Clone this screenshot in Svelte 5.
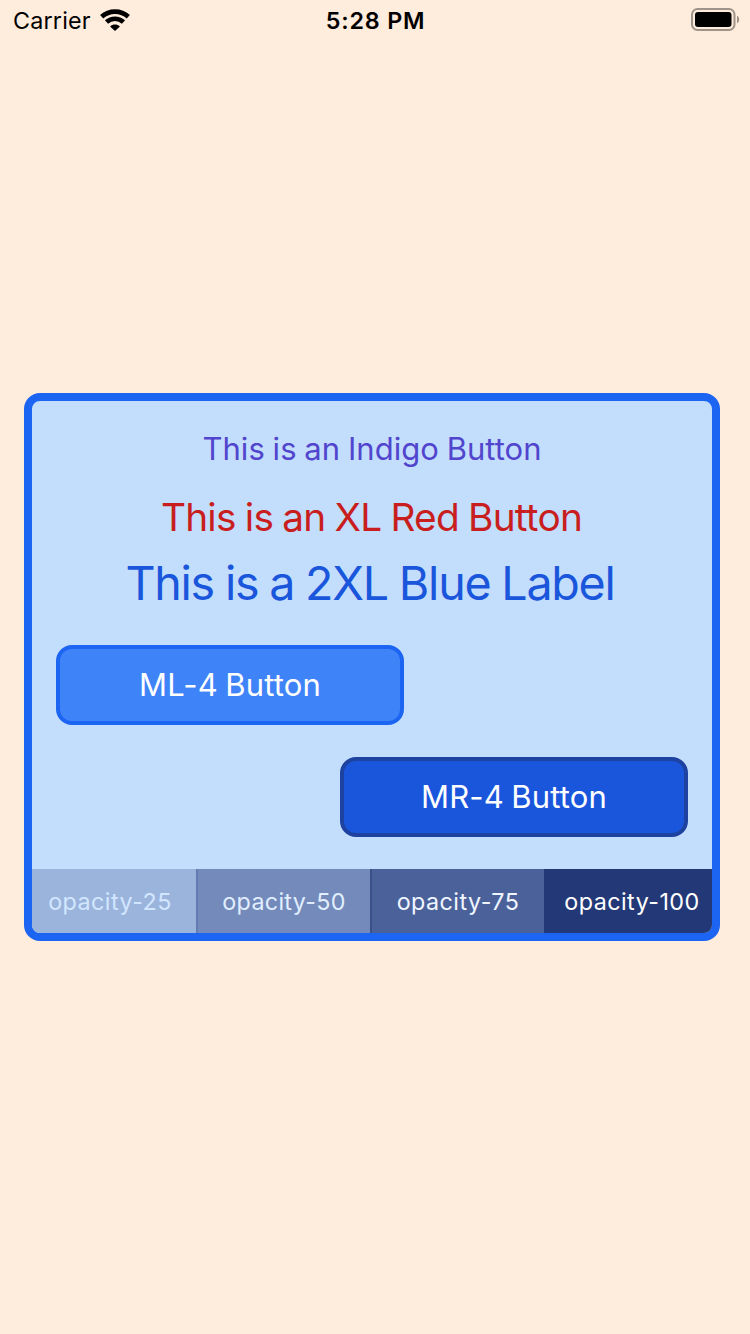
<script>
  const tabs = [
    { label: 'opacity-25', tone: 'q1' },
    { label: 'opacity-50', tone: 'q2' },
    { label: 'opacity-75', tone: 'q3' },
    { label: 'opacity-100', tone: 'q4' }
  ];
</script>

<div class="screen">
  <header class="status">
    <div class="left">
      <span class="carrier">Carrier</span>
      <svg class="wifi" width="30" height="22" viewBox="0 0 30 22" aria-hidden="true">
        <g fill="none" stroke="#000" stroke-width="4.7">
          <path d="M1.7 7.7C9.2 0.8 20.8 0.8 28.3 7.7" />
          <path d="M6.5 13.1C11.4 8.6 18.6 8.6 23.5 13.1" />
        </g>
        <path d="M10.1 17.4C13 14.8 17 14.8 19.9 17.4L15.6 21.6Q15 22 14.4 21.6Z" />
      </svg>
    </div>
    <span class="time">5:28 PM</span>
    <svg class="battery" width="49" height="24" viewBox="0 0 49 24" aria-hidden="true">
      <rect x="1" y="1" width="42.5" height="21" rx="5.5" fill="none" stroke="#9f9489" stroke-width="2" />
      <rect x="4" y="4" width="36.5" height="15" rx="3" />
      <path d="M46 7.7C48.9 8.8 48.9 14.2 46 15.3Z" fill="#9f9489" />
    </svg>
  </header>

  <main class="card">
    <button class="link indigo"><span>This is an Indigo Button</span></button>
    <button class="link red"><span>This is an XL Red Button</span></button>
    <p class="link blue"><span>This is a 2XL Blue Label</span></p>
    <button class="pill ml"><span>ML-4 Button</span></button>
    <button class="pill mr"><span>MR-4 Button</span></button>
    <div class="tabs">
      {#each tabs as tab}
        <div class="tab {tab.tone}"><span>{tab.label}</span></div>
      {/each}
    </div>
  </main>
</div>

<style>
  :global(body) {
    margin: 0;
    background: #feecdc;
  }
  .screen {
    box-sizing: border-box;
    width: 750px;
    height: 1334px;
    background: #feecdc;
    font-family: Inter, 'Liberation Sans', sans-serif;
    overflow: hidden;
  }
  .status {
    display: grid;
    grid-template-columns: 1fr auto 1fr;
    align-items: center;
    height: 40px;
    padding: 0 10px 0 13px;
    color: #000;
    font-size: 23.3px;
    line-height: 40px;
  }
  .left {
    display: flex;
    align-items: center;
    gap: 9px;
  }
  .carrier {
    padding-top: 2px;
    line-height: 38px;
    letter-spacing: 0.2px;
  }
  .time {
    padding: 2px 2px 0 0;
    line-height: 38px;
    font-weight: 560;
    letter-spacing: 0.8px;
  }
  .battery {
    justify-self: end;
  }
  .card {
    box-sizing: border-box;
    display: flex;
    flex-direction: column;
    width: 696px;
    height: 548px;
    margin: 353px 0 0 24px;
    border: 8px solid #1c64f2;
    border-radius: 16px;
    background: #c3ddfd;
    overflow: hidden;
  }
  button {
    border: 0;
    background: none;
    font-family: inherit;
  }
  .link {
    box-sizing: border-box;
    display: flex;
    align-items: center;
    justify-content: center;
    margin: 0;
    padding: 0;
    white-space: nowrap;
  }
  .indigo {
    height: 64px;
    margin-top: 16px;
    padding-bottom: 2px;
    color: #5145cd;
    font-size: 31px;
    letter-spacing: 0.02px;
    word-spacing: -0.9px;
  }
  .red {
    height: 72px;
    padding: 0 1px 2px 0;
    color: #c81e1e;
    font-size: 38.8px;
    letter-spacing: -0.75px;
    word-spacing: -1.1px;
  }
  .blue {
    height: 60px;
    padding-right: 4px;
    color: #1a56db;
    font-size: 46.6px;
    letter-spacing: -1.25px;
    word-spacing: -0.9px;
  }
  .pill {
    box-sizing: border-box;
    display: flex;
    align-items: center;
    justify-content: center;
    width: 348px;
    height: 80px;
    padding: 0 0 2px;
    border-radius: 16px;
    color: #fff;
    font-size: 31px;
    letter-spacing: 0.15px;
    word-spacing: -1.4px;
  }
  .ml {
    margin: 32px 0 0 24px;
    border: 4px solid #1c64f2;
    background: #3f83f8;
  }
  .mr {
    align-self: flex-end;
    margin: 32px 24px 0 0;
    border: 4px solid #1e429f;
    background: #1a56db;
  }
  .tabs {
    display: grid;
    grid-template-columns: 172px 174px 174px 176px;
    height: 64px;
    margin: 32px -8px 0;
  }
  .tab {
    box-sizing: border-box;
    display: flex;
    align-items: center;
    justify-content: center;
    font-size: 23.3px;
    letter-spacing: 0.46px;
  }
  .q1 {
    background: #9bb4dc;
    color: #d2e6ff;
  }
  .q2 {
    border-left: 2px solid #627bb0;
    background: #738aba;
    color: #e1eeff;
    letter-spacing: 0.3px;
  }
  .q3 {
    border-left: 2px solid #3b5089;
    background: #4b619a;
    color: #f0f6ff;
  }
  .q4 {
    background: #233876;
    color: #fff;
  }
</style>
